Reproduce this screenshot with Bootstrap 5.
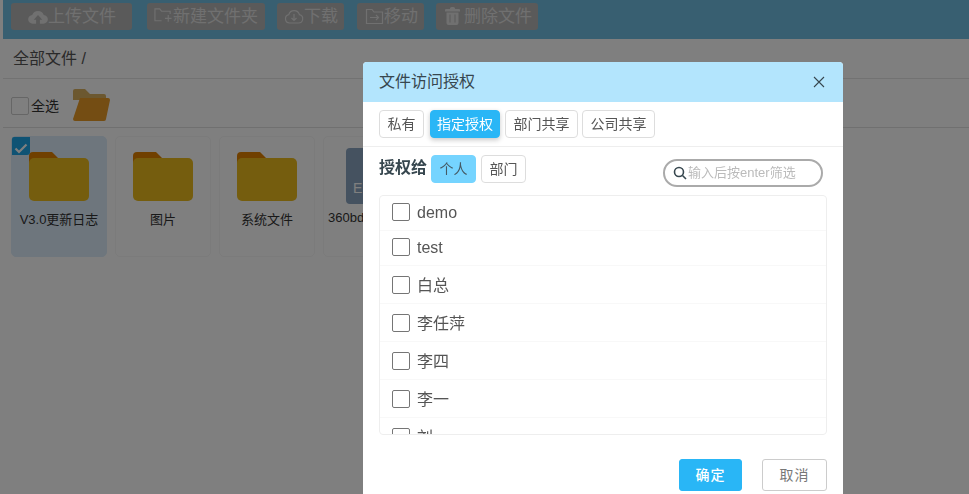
<!DOCTYPE html>
<html lang="zh">
<head>
<meta charset="utf-8">
<title>文件访问授权</title>
<link href="https://cdn.jsdelivr.net/npm/bootstrap@5.3.0/dist/css/bootstrap.min.css" rel="stylesheet">
<style>
html,body{height:494px;overflow:hidden}
body{font-family:"Liberation Sans","Noto Sans CJK SC",sans-serif;background:#fff;color:#333;padding-left:3px}
.topbar{height:39px;background:#70bfe2;padding:3px 0 0 8px;gap:12px}
.topbtn{height:27px;background:#b4b4b4;border-radius:3px;font-size:17px;line-height:27px;white-space:nowrap;color:#e0e0e0}
.tb1{width:121px;margin-right:3px;padding-left:17px}
.tb2{width:118px;padding-left:7px}
.tb3{width:67px;margin-right:1px;padding-left:7px}
.tb4{width:67px;padding-left:8px}
.tb5{width:102px;padding-left:9px}
.topbtn svg{vertical-align:-3px}
.crumb{height:40px;border-bottom:1px solid #e4e4e4;font-size:16px;padding-left:10px;line-height:39px;color:#555}
.toolrow{height:49px;border-bottom:1px solid #e0e0e0;padding:6px 0 0 8px;background:#fff;font-size:14px}
.chk{width:18px;height:18px;border:1px solid #ccc;border-radius:2px;background:#fff;flex:none}
.alltxt{margin-left:2px}
.openfolder{margin:-4px 0 0 13px}
.filegrid{padding:8px 0 0 8px;gap:8px}
.filecard{width:96px;height:121px;border:1px solid #f6f6f6;border-radius:5px;position:relative;text-align:center;font-size:13px;padding-top:15px;color:#333}
.filecard.sel{background:#dcedfb;border-color:#dcedfb}
.tick{position:absolute;left:0;top:0;width:18px;height:18px;background:#1ea7e8;border-radius:2px 0 3px 0}
.fname{margin-top:9px;line-height:20px;white-space:nowrap}
.fileicon{width:46px;height:56px;border-radius:4px;background:#8aa4c0;margin:-4px 0 0 22px;color:#fff;font-size:14px;text-align:left;padding:30px 0 0 7px;line-height:20px}
.fname2{margin-top:4px;text-align:left;padding-left:4px;white-space:nowrap;line-height:20px;font-size:13px}
.dim{position:fixed;inset:0;background:rgba(0,0,0,.5);z-index:10}
.dlg{position:fixed;left:363px;top:62px;width:480px;height:460px;z-index:20;background:#fff;border:0;border-radius:4px;overflow:hidden}
.dlghead{height:40px;background:#b3e5fd;padding:0 16px;color:#37474f;font-size:16px}
.closex{width:12px;height:12px;margin-right:2px;display:block}
.tabrow{height:45px;border-bottom:1px solid #eee;padding:8px 0 0 16px;gap:4px;align-items:flex-start}
.mybtn{height:28px;border:1px solid #ddd;border-radius:4px;background:#fff;color:#555;font-size:14px;line-height:26px;text-align:center;padding:0}
.w45{width:45px}.w73{width:73px}
.mybtn.on{background:#29b6f6;border-color:#29b6f6;color:#fff;width:70px;box-shadow:0 2px 5px rgba(0,0,0,.22);margin:0 1px 0 2px}
.forrow{height:48px;padding-left:16px}
.forlabel{font-size:16px;font-weight:700;color:#37474f;margin:9px 4px 0 0;line-height:24px}
.subbtns{gap:5px;margin-top:8px}
.mybtn.pers{background:#75d4ff;border-color:#75d4ff;color:#455a64}
.searchbox{margin:12px 20px 0 auto;width:160px;height:28px;border:2px solid #aaa;border-radius:14px;background:#fff;font-size:13px;color:#bbb;padding:0 0 0 8px;gap:1px;white-space:nowrap}
.ulist{margin:0 16px;height:240px;border:1px solid #eee;border-radius:4px;overflow:hidden}
.urow{height:38px;border-bottom:1px solid #f8f8f8;padding:1px 0 0 12px;gap:7px;font-size:16px;color:#555;flex:none}
.urow.short{height:35px;padding:0 0 2px 12px}
.ubox{width:18px;height:18px;border:1px solid #757575;border-radius:2px;background:#fff;flex:none}
.utxt{margin-top:2px}
.dlgfoot{padding:24px 16px 0 0;gap:20px;justify-content:flex-end}
.okbtn,.nobtn{height:32px;border-radius:3px;font-size:14px;letter-spacing:1px;line-height:30px;padding:0;text-align:center}
.okbtn{width:63px;background:#29b6f6;border:1px solid #29b6f6;color:#fff;font-weight:500}
.nobtn{width:65px;background:#fff;border:1px solid #ccc;color:#777}
</style>
</head>
<body>
<div class="topbar d-flex align-items-start">
  <div class="topbtn tb1"><svg width="20" height="16" viewBox="0 0 21 16"><path fill="#e0e0e0" d="M5 15a4.500 4.500 0 0 1-.6-9A6.500 6.500 0 0 1 16.600 6 4.500 4.500 0 0 1 16 15h-3.500v-4H15l-4.500-5L6 11h2.500v4z"/></svg>上传文件</div>
  <div class="topbtn tb2"><svg width="19" height="18" viewBox="0 0 20 18" fill="none" stroke="#e0e0e0" stroke-width="1.200"><path d="M8 14H1V1.500h5l2 2.500h9v3"/><path d="M15 8v7M11.500 11.500h7"/></svg>新建文件夹</div>
  <div class="topbtn tb3"><svg width="20" height="17" viewBox="0 0 20 17" fill="none" stroke="#e0e0e0" stroke-width="1.200"><path d="M5.500 15a4.200 4.200 0 0 1-.7-8.300 5.500 5.500 0 0 1 10.600 0A4.200 4.200 0 0 1 14.500 15z"/><path d="M10 6v6.500M7.500 10l2.500 2.500 2.500-2.500"/></svg>下载</div>
  <div class="topbtn tb4"><svg width="19" height="17" viewBox="0 0 19 17" fill="none" stroke="#e0e0e0" stroke-width="1.200"><path d="M1.500 15.500V1.500h5.500l2 2.500h8.500v11.500z"/><path d="M5 9.500h8.500M11 7l2.500 2.500L11 12"/></svg>移动</div>
  <div class="topbtn tb5"><svg class="me-1" width="15" height="18" viewBox="0 0 15 18" fill="#e0e0e0"><path fill-rule="evenodd" d="M5 1.500A1.500 1.500 0 0 1 6.500 0h2A1.500 1.500 0 0 1 10 1.500V2h4a1 1 0 0 1 1 1v1.500H0V3a1 1 0 0 1 1-1h4zM1.500 5.500h12V16a2 2 0 0 1-2 2h-8a2 2 0 0 1-2-2zM4.500 7.500v8h1v-8zm5 0v8h1v-8z"/></svg>删除文件</div>
</div>
<div class="crumb">全部文件 /</div>
<div class="toolrow d-flex align-items-center">
  <span class="chk"></span><span class="alltxt">全选</span>
  <svg class="openfolder" width="39" height="33" viewBox="0 0 39 33"><path fill="#d9b060" d="M1 3a2 2 0 0 1 2-2h10l5 5h14a2 2 0 0 1 2 2v4H1z"/><path fill="#e89a26" d="M8 10h28a2 2 0 0 1 2 2l-4 19a2 2 0 0 1-2 2H3a2 2 0 0 1-2-2z"/></svg>
</div>
<div class="filegrid d-flex">
  <div class="filecard sel">
    <span class="tick"><svg width="18" height="18" viewBox="0 0 18 18" fill="none" stroke="#fff" stroke-width="2.200"><path d="M3.500 9.500l3.500 3.500 7.500-7.500"/></svg></span>
    <svg width="62" height="49" viewBox="0 0 62 49"><path fill="#e08000" d="M1 4a4 4 0 0 1 4-4h19l6 6v12H1z"/><rect fill="#ebba1d" x="1" y="6" width="60" height="43" rx="5"/></svg>
    <div class="fname">V3.0更新日志</div>
  </div>
  <div class="filecard">
    <svg width="62" height="49" viewBox="0 0 62 49"><path fill="#e08000" d="M1 4a4 4 0 0 1 4-4h19l6 6v12H1z"/><rect fill="#ebba1d" x="1" y="6" width="60" height="43" rx="5"/></svg>
    <div class="fname">图片</div>
  </div>
  <div class="filecard">
    <svg width="62" height="49" viewBox="0 0 62 49"><path fill="#e08000" d="M1 4a4 4 0 0 1 4-4h19l6 6v12H1z"/><rect fill="#ebba1d" x="1" y="6" width="60" height="43" rx="5"/></svg>
    <div class="fname">系统文件</div>
  </div>
  <div class="filecard">
    <div class="fileicon">E</div>
    <div class="fname2">360bd</div>
  </div>
</div>
<div class="dim"></div>
<div class="dlg modal-content">
  <div class="dlghead d-flex align-items-center justify-content-between">
    <span>文件访问授权</span>
    <svg class="closex" viewBox="0 0 12 12" stroke="#37474f" stroke-width="1.100"><path d="M1 1l10 10M11 1L1 11"/></svg>
  </div>
  <div class="tabrow d-flex">
    <button class="mybtn btn w45">私有</button>
    <button class="mybtn btn on">指定授权</button>
    <button class="mybtn btn w73">部门共享</button>
    <button class="mybtn btn w73">公司共享</button>
  </div>
  <div class="forrow d-flex align-items-start">
    <span class="forlabel">授权给</span>
    <div class="subbtns d-flex">
      <button class="mybtn btn pers w45">个人</button>
      <button class="mybtn btn w45">部门</button>
    </div>
    <div class="searchbox d-flex align-items-center">
      <svg width="14" height="14" viewBox="0 0 14 14" fill="none" stroke="#37474f" stroke-width="1.600"><circle cx="6" cy="6" r="4.500"/><path d="M9.500 9.500l3.500 3.500"/></svg>
      <span>输入后按enter筛选</span>
    </div>
  </div>
  <div class="ulist d-flex flex-column">
    <div class="urow short d-flex align-items-center"><span class="ubox"></span><span class="utxt">demo</span></div>
    <div class="urow short d-flex align-items-center"><span class="ubox"></span><span class="utxt">test</span></div>
    <div class="urow d-flex align-items-center"><span class="ubox"></span><span class="utxt">白总</span></div>
    <div class="urow d-flex align-items-center"><span class="ubox"></span><span class="utxt">李任萍</span></div>
    <div class="urow d-flex align-items-center"><span class="ubox"></span><span class="utxt">李四</span></div>
    <div class="urow d-flex align-items-center"><span class="ubox"></span><span class="utxt">李一</span></div>
    <div class="urow d-flex align-items-center"><span class="ubox"></span><span class="utxt">刘</span></div>
  </div>
  <div class="dlgfoot d-flex">
    <button class="okbtn btn">确定</button>
    <button class="nobtn btn">取消</button>
  </div>
</div>
</body>
</html>
